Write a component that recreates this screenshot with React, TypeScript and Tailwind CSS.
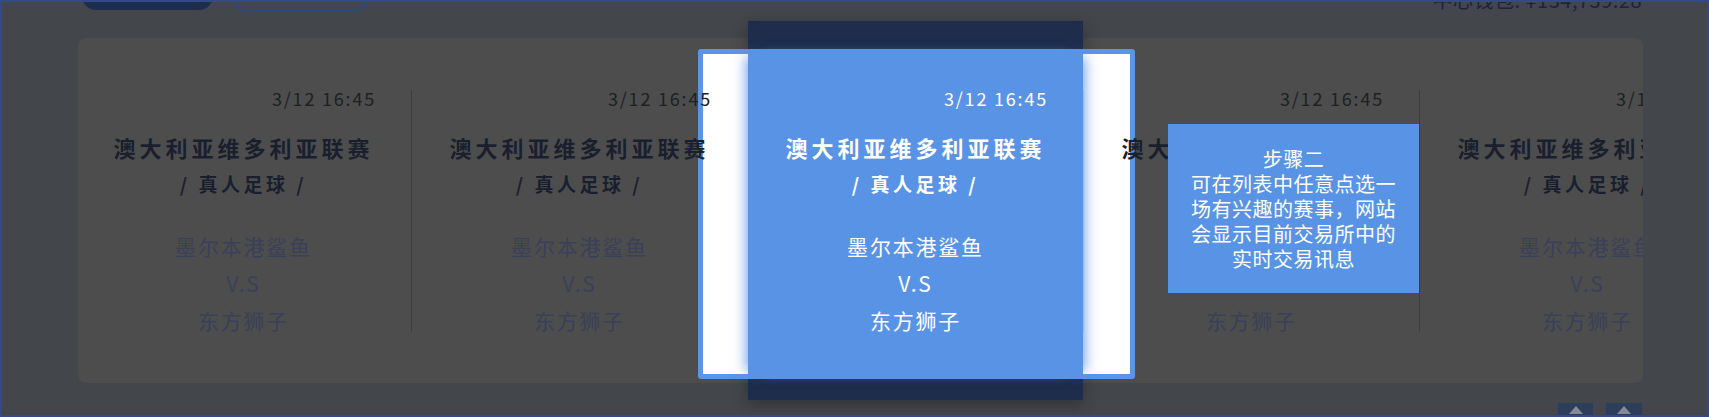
import React from 'react';

interface Match {
  id: number;
  time: string;
  league: string;
  sport: string;
  home: string;
  away: string;
}

const matches: Match[] = [1, 2, 3, 4, 5].map((id) => ({
  id,
  time: '3/12 16:45',
  league: '澳大利亚维多利亚联赛',
  sport: '真人足球',
  home: '墨尔本港鲨鱼',
  away: '东方狮子',
}));

const ACTIVE = 3;

function MatchColumn({ match, active, beforeActive }: { match: Match; active: boolean; beforeActive: boolean }) {
  const divider = active ? 'border-[#dce8fb]' : beforeActive ? 'border-transparent' : 'border-[#3d3d3d]';
  return (
    <div className={`relative w-[336px] h-[242px] shrink-0 border-r ${divider}`}>
      {active && (
        <>
          {/* dark backing plate, sits under the spotlight frame */}
          <div className="absolute -z-10 left-0 right-0 -top-[69px] h-[379px] bg-[#1e2d4b] shadow-[0_4px_14px_rgba(0,0,0,0.3)]" />
          {/* highlighted card, glow only to the sides */}
          <div className="absolute left-0 right-0 -top-[41px] h-[330px] bg-[#5893e6] shadow-[-10px_0_12px_-8px_rgba(88,147,230,0.85),10px_0_12px_-8px_rgba(88,147,230,0.85)]" />
        </>
      )}
      <div className="relative">
        <div
          className={`text-right pr-[35px] text-[18px] leading-[16px] tracking-[1.8px] ${
            active ? 'text-white' : 'text-[#1f2023]'
          }`}
        >
          {match.time}
        </div>
        <div
          className={`mt-[26px] text-center text-[22px] leading-[30px] font-bold tracking-[4px] ${
            active ? 'text-white' : 'text-[#1a1f2e]'
          }`}
        >
          {match.league}
        </div>
        <div
          className={`mt-[10px] text-center text-[19px] leading-[24px] font-bold tracking-[3.5px] ${
            active ? 'text-white' : 'text-[#1a1f2e]'
          }`}
        >
          / {match.sport} /
        </div>
        <div
          className={`mt-[32px] text-center text-[21px] leading-[37px] tracking-[1.8px] ${
            active ? 'text-white' : 'text-[#3a4058]'
          }`}
        >
          <div>{match.home}</div>
          <div>V.S</div>
          <div>{match.away}</div>
        </div>
      </div>
    </div>
  );
}

function UpIcon() {
  return (
    <svg width="14" height="8" viewBox="0 0 14 8" className="mx-auto mt-[3px]">
      <path d="M7 0 L14 8 L0 8 Z" fill="#858b96" />
    </svg>
  );
}

export default function App() {
  return (
    <div
      className="relative w-[1709px] h-[417px] overflow-hidden bg-[#43464b] border-2 border-[#34498a]"
      style={{ fontFamily: '"Noto Sans CJK SC", "Noto Sans", sans-serif' }}
    >
      {/* top bar, scrolled partly out of view */}
      <div className="flex items-start justify-between -mt-[30px] h-[40px] pl-[80px] pr-[65px]">
        <div className="flex items-start gap-[20px]">
          <button className="w-[131px] h-[38px] rounded-[14px] bg-[#1e2f4e]" />
          <button className="w-[135px] h-[40px] rounded-[14px] border-2 border-[#2d4a7c]" />
        </div>
        <div className="mt-[18px] text-[20px] leading-[20px] text-[#1f2433] tracking-[0.5px]">
          中心钱包: ¥134,739.28
        </div>
      </div>

      {/* match list panel */}
      <div className="relative isolate mt-[26px] ml-[76px] w-[1565px] h-[345px] pt-[52px] rounded-lg bg-[#4d4d4d] overflow-x-clip">
        {/* spotlight frame */}
        <div className="absolute left-[620px] top-[11px] w-[437px] h-[330px] rounded-[3px] border-[5px] border-[#5b95e8] bg-white" />
        <div className="relative flex -ml-[2px]">
          {matches.map((m) => (
            <MatchColumn
              key={m.id}
              match={m}
              active={m.id === ACTIVE}
              beforeActive={m.id === ACTIVE - 1}
            />
          ))}
        </div>
      </div>

      {/* back-to-top buttons */}
      <div className="flex justify-end gap-[13px] mt-[20px] pr-[65px]">
        <div className="w-[35px] h-[36px] bg-[#2c3e5c]">
          <UpIcon />
        </div>
        <div className="w-[36px] h-[36px] bg-[#2c3e5c]">
          <UpIcon />
        </div>
      </div>

      {/* guide tooltip */}
      <div className="absolute left-[1166px] top-[122px] w-[251px] h-[169px] bg-[#5893e5] flex flex-col items-center justify-center text-white text-[20px] leading-[25px] tracking-[0.5px] text-center">
        <div>步骤二</div>
        <div>可在列表中任意点选一</div>
        <div>场有兴趣的赛事，网站</div>
        <div>会显示目前交易所中的</div>
        <div>实时交易讯息</div>
      </div>
    </div>
  );
}
